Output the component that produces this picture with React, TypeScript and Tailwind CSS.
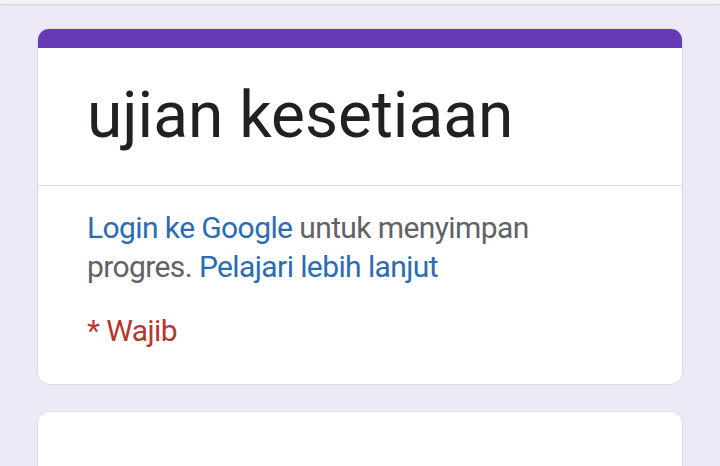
import React from "react";

export default function App() {
  return (
    <div className="w-[720px] h-[466px] overflow-hidden bg-[#ede9f7]" style={{ fontFamily: "Roboto, 'Noto Sans', sans-serif" }}>
      <div className="h-[4px] bg-[#f3f2f6] shadow-[0_1px_2px_rgba(0,0,0,0.12)]" />
      <div className="px-[37px] pt-[24px] flex flex-col gap-[26px]">
        <div className="rounded-[12px] bg-white border border-[#dadce0] overflow-hidden">
          <div className="h-[20px] bg-[#673ab7] -mx-px -mt-px" />
          <div className="h-[138px] border-b border-[#dadce0] pl-[49px] pt-[28px]">
            <div className="text-[64px] leading-[80px] text-[#202124]">ujian kesetiaan</div>
          </div>
          <div className="pl-[49px] pt-[22px] pb-[34px]">
            <p className="text-[30px] leading-[39px] tracking-[-0.6px] text-[#5f6368] w-[470px]">
              <span className="text-[#2b6cb5]">Login ke Google</span> untuk menyimpan progres.{" "}
              <span className="text-[#2b6cb5]">Pelajari lebih lanjut</span>
            </p>
            <div className="mt-[25px] text-[30px] leading-[39px] tracking-[-0.6px] text-[#b5372f]">* Wajib</div>
          </div>
        </div>
        <div className="rounded-[12px] bg-white border border-[#dadce0] h-[120px]" />
      </div>
    </div>
  );
}
